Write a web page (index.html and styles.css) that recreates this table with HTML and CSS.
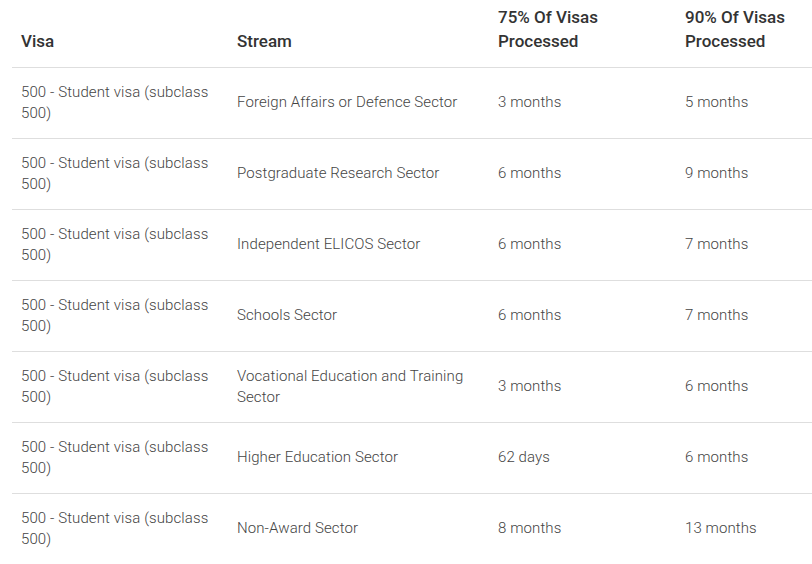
FILE: index.html
```html
<!DOCTYPE html>
<html>
<head>
<meta charset="utf-8">
<link rel="stylesheet" href="styles.css">
</head>
<body>
<div class="wrap">
<table class="visa-table">
  <colgroup>
    <col class="c1"><col class="c2"><col class="c3"><col class="c4">
  </colgroup>
  <thead>
    <tr><th>Visa</th><th>Stream</th><th>75% Of Visas Processed</th><th>90% Of Visas Processed</th></tr>
  </thead>
  <tbody>
    <tr><td>500 - Student visa (subclass 500)</td><td>Foreign Affairs or Defence Sector</td><td>3 months</td><td>5 months</td></tr>
    <tr><td>500 - Student visa (subclass 500)</td><td>Postgraduate Research Sector</td><td>6 months</td><td>9 months</td></tr>
    <tr><td>500 - Student visa (subclass 500)</td><td>Independent ELICOS Sector</td><td>6 months</td><td>7 months</td></tr>
    <tr><td>500 - Student visa (subclass 500)</td><td>Schools Sector</td><td>6 months</td><td>7 months</td></tr>
    <tr><td>500 - Student visa (subclass 500)</td><td>Vocational Education and Training Sector</td><td>3 months</td><td>6 months</td></tr>
    <tr><td>500 - Student visa (subclass 500)</td><td>Higher Education Sector</td><td>62 days</td><td>6 months</td></tr>
    <tr><td>500 - Student visa (subclass 500)</td><td>Non-Award Sector</td><td>8 months</td><td>13 months</td></tr>
  </tbody>
</table>
</div>
</body>
</html>
```
FILE: styles.css
```css
html, body {
  margin: 0;
  padding: 0;
  background: #fff;
}
.wrap {
  margin-left: 12px;
  overflow: hidden;
}
.visa-table {
  border-collapse: collapse;
  table-layout: fixed;
  width: 851px;
  font-family: Roboto, "Liberation Sans", sans-serif;
}
.c1 { width: 216px; }
.c2 { width: 261px; }
.c3 { width: 187px; }
.c4 { width: 187px; }
.visa-table th {
  text-align: left;
  vertical-align: bottom;
  font-weight: 500;
  font-size: 17px;
  line-height: 24px;
  color: #333;
  padding: 5px 9px 14px;
  border-bottom: 1px solid #dedede;
}
.visa-table td {
  vertical-align: middle;
  font-weight: 300;
  font-size: 15px;
  letter-spacing: 0.1px;
  line-height: 21px;
  color: #444;
  padding: 13.5px 9px 14.5px;
  height: 42px;
  border-bottom: 1px solid #dedede;
}
```
